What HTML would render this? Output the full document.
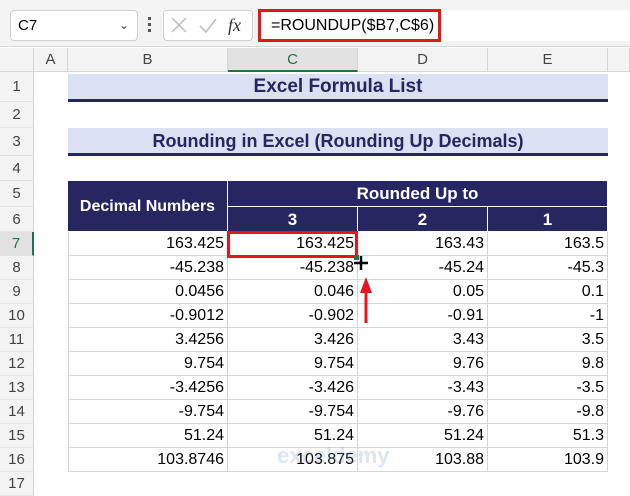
<!DOCTYPE html>
<html><head><meta charset="utf-8"><style>
*{margin:0;padding:0;box-sizing:border-box}
body{width:630px;height:494px;background:#fff;position:relative;overflow:hidden;font-family:"Liberation Sans",sans-serif;color:#000}
.a{position:absolute}
.ch{position:absolute;top:48px;height:24px;background:#f3f3f3;border-right:1px solid #d6d6d6;border-bottom:1px solid #d6d6d6;font-size:15px;color:#444;text-align:center;line-height:24px}
.rh{position:absolute;left:0;width:34px;background:#f3f3f3;border-right:1px solid #d6d6d6;border-bottom:1px solid #e0e0e0;font-size:15px;color:#444;text-align:center}
.c{position:absolute;font-size:16px;text-align:right;padding-right:3px;height:24px;line-height:24px;border-right:1px solid #d4d4d4;border-bottom:1px solid #d4d4d4}
.h{position:absolute;background:#262660;color:#fff;font-weight:bold;font-size:16px;text-align:center;border-right:1px solid #fff;border-bottom:1px solid #fff}
</style></head><body>
<div class="a" style="left:0;top:0;width:630px;height:47px;background:#f3f3f3;border-bottom:1px solid #d6d6d6"></div>
<div class="a" style="left:10px;top:10px;width:128px;height:31px;background:#fff;border:1px solid #d0d0d0;border-radius:4px;font-size:15px;line-height:29px;padding-left:7px">C7<span style="position:absolute;right:8px;top:0;font-size:12px;color:#444">&#8964;</span></div>
<div class="a" style="left:148px;top:17px;width:3px;height:3px;background:#555;box-shadow:0 6px 0 #555,0 12px 0 #555"></div>
<div class="a" style="left:163px;top:10px;width:90px;height:31px;background:#fff;border:1px solid #d0d0d0;border-radius:4px"></div>
<svg class="a" style="left:170px;top:16px" width="80" height="20"><path d="M2 2L16 16M16 2L2 16" stroke="#bbb" stroke-width="1.5"/><path d="M30 10L36 16L46 3" stroke="#bbb" stroke-width="1.5" fill="none"/><text x="58" y="15" font-family="Liberation Serif" font-style="italic" font-size="18" fill="#333">fx</text></svg>
<div class="a" style="left:258px;top:9px;width:183px;height:33px;background:#fff;border:3px solid #e8141c;font-size:16px;line-height:27px;padding-left:10px">=ROUNDUP($B7,C$6)</div>
<div class="a" style="left:441px;top:10px;width:189px;height:31px;background:#fff"></div>

<div class="ch" style="left:0;width:34px"></div>
<div class="ch" style="left:34px;width:34px">A</div>
<div class="ch" style="left:68px;width:160px">B</div>
<div class="ch" style="left:228px;width:130px;background:#e1e1e1;color:#217346;border-bottom:2px solid #217346">C</div>
<div class="ch" style="left:358px;width:130px">D</div>
<div class="ch" style="left:488px;width:120px">E</div>
<div class="ch" style="left:608px;width:22px"></div>

<div class="rh" style="top:72px;height:30px;line-height:30px">1</div>
<div class="rh" style="top:102px;height:26px;line-height:26px">2</div>
<div class="rh" style="top:128px;height:28px;line-height:28px">3</div>
<div class="rh" style="top:156px;height:25px;line-height:25px">4</div>
<div class="rh" style="top:181px;height:26px;line-height:26px">5</div>
<div class="rh" style="top:207px;height:25px;line-height:25px">6</div>
<div class="rh" style="top:232px;height:24px;line-height:24px;background:#e1e1e1;color:#217346;border-right:2px solid #217346">7</div>
<div class="rh" style="top:256px;height:24px;line-height:24px">8</div>
<div class="rh" style="top:280px;height:24px;line-height:24px">9</div>
<div class="rh" style="top:304px;height:24px;line-height:24px">10</div>
<div class="rh" style="top:328px;height:24px;line-height:24px">11</div>
<div class="rh" style="top:352px;height:24px;line-height:24px">12</div>
<div class="rh" style="top:376px;height:24px;line-height:24px">13</div>
<div class="rh" style="top:400px;height:24px;line-height:24px">14</div>
<div class="rh" style="top:424px;height:24px;line-height:24px">15</div>
<div class="rh" style="top:448px;height:24px;line-height:24px">16</div>
<div class="rh" style="top:472px;height:24px;line-height:24px">17</div>

<div class="a" style="left:68px;top:74px;width:540px;height:28px;background:#d9e1f2;border-bottom:3px solid #262660;color:#262660;font-weight:bold;font-size:19px;text-align:center;line-height:26px">Excel Formula List</div>
<div class="a" style="left:68px;top:128px;width:540px;height:28px;background:#d9e1f2;border-bottom:3px solid #262660;color:#262660;font-weight:bold;font-size:18px;text-align:center;line-height:26px">Rounding in Excel (Rounding Up Decimals)</div>

<div class="h" style="left:68px;top:181px;width:160px;height:51px;line-height:51px;font-size:16px">Decimal Numbers</div>
<div class="h" style="left:228px;top:181px;width:380px;height:26px;line-height:26px;font-size:17px">Rounded Up to</div>
<div class="h" style="left:228px;top:207px;width:130px;height:25px;line-height:25px;font-size:17px">3</div>
<div class="h" style="left:358px;top:207px;width:130px;height:25px;line-height:25px;font-size:17px">2</div>
<div class="h" style="left:488px;top:207px;width:120px;height:25px;line-height:25px;font-size:17px">1</div>

<div id="t"></div>
<script>
var d=[["163.425","163.425","163.43","163.5"],["-45.238","-45.238","-45.24","-45.3"],["0.0456","0.046","0.05","0.1"],["-0.9012","-0.902","-0.91","-1"],["3.4256","3.426","3.43","3.5"],["9.754","9.754","9.76","9.8"],["-3.4256","-3.426","-3.43","-3.5"],["-9.754","-9.754","-9.76","-9.8"],["51.24","51.24","51.24","51.3"],["103.8746","103.875","103.88","103.9"]];
var L=[68,228,358,488],W=[160,130,130,120],h="";
d.forEach(function(r,i){r.forEach(function(v,j){h+='<div class="c" style="left:'+L[j]+'px;top:'+(232+i*24)+'px;width:'+W[j]+'px;'+(j==0?'border-left:1px solid #d4d4d4;':'')+'">'+v+'</div>'})});
document.getElementById('t').innerHTML=h;
</script>
<div class="a" style="left:227px;top:231px;width:131px;height:27px;border:3px solid #e8141c"></div>
<div class="a" style="left:354px;top:255px;width:5px;height:5px;background:#217346"></div>
<svg class="a" style="left:352px;top:253px" width="30" height="75"><path d="M9 3V17M2 10H16" stroke="#000" stroke-width="2.5"/><path d="M14 70V38" stroke="#e8141c" stroke-width="3"/><path d="M8 40L14 24L20 40Z" fill="#e8141c"/></svg>
<div class="a" style="left:277px;top:443px;font-size:22px;font-weight:bold;color:rgba(120,150,200,0.25)">exceldemy</div>
</body></html>
